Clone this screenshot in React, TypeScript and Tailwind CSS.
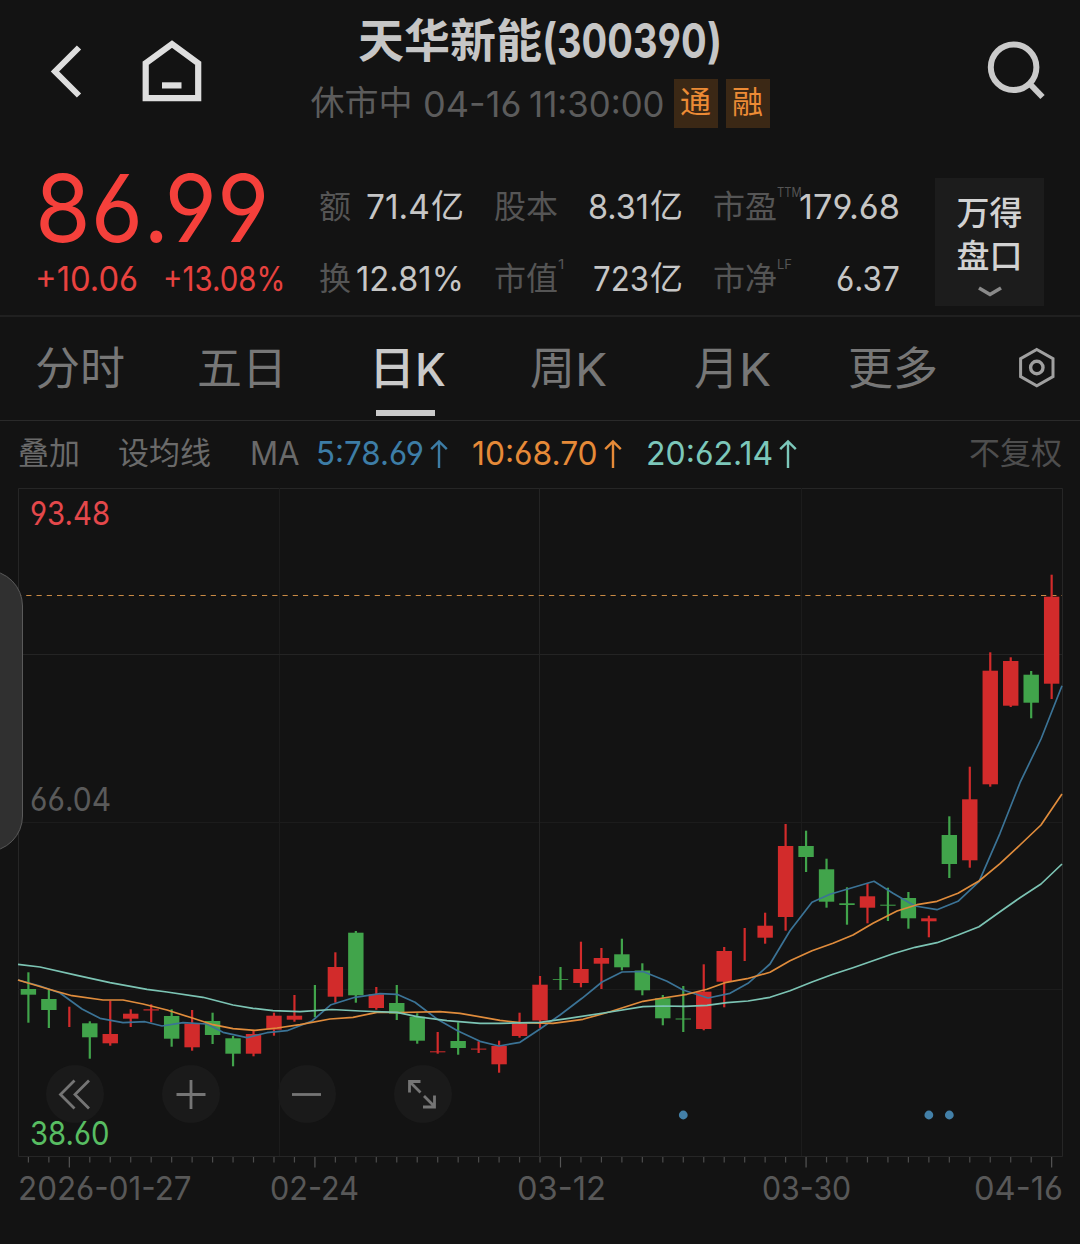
import { useLayoutEffect, useRef, type ReactNode } from 'react';

type TextProps = { w: number; className?: string; children: ReactNode };

/* Text squeezed or stretched horizontally so that it fills exactly `w` pixels. */
function Fit({ w, className = '', children }: TextProps) {
  const ref = useRef<HTMLSpanElement>(null);
  useLayoutEffect(() => {
    const el = ref.current;
    if (el && el.offsetWidth > 0) el.style.transform = `scaleX(${w / el.offsetWidth})`;
  }, [w]);
  return (
    <span className={`block shrink-0 whitespace-pre ${className}`} style={{ width: w }}>
      <span ref={ref} className="inline-block origin-left">
        {children}
      </span>
    </span>
  );
}

function Num({ w, className = '', children }: TextProps) {
  return (
    <Fit
      w={w}
      className={`font-['Inter','Noto_Sans_CJK_SC',sans-serif] [font-feature-settings:'cv03','cv04'] ${className}`}
    >
      {children}
    </Fit>
  );
}

function Cjk({ w, className = '', children }: TextProps) {
  return (
    <Fit w={w} className={`-translate-y-[0.085em] font-['Noto_Sans_CJK_SC',sans-serif] ${className}`}>
      {children}
    </Fit>
  );
}

type Stat = { label: string; lw: number; sup?: string; supW?: number; value: string; vw: number; unit?: boolean };

const stats: Stat[] = [
  { label: '额', lw: 32, value: '71.4', vw: 64, unit: true },
  { label: '股本', lw: 64, value: '8.31', vw: 61, unit: true },
  { label: '市盈', lw: 64, sup: 'TTM', supW: 25, value: '179.68', vw: 101 },
  { label: '换', lw: 32, value: '12.81%', vw: 108 },
  { label: '市值', lw: 64, sup: '1', supW: 6, value: '723', vw: 56, unit: true },
  { label: '市净', lw: 64, sup: 'LF', supW: 15, value: '6.37', vw: 64 },
];

/* [rising, high, low, body top, body bottom] */
type Candle = [0 | 1, number, number, number, number];

const candles: Candle[] = [
  [0, 972.3, 1022.7, 989, 994.7],
  [0, 990, 1028, 999, 1010],
  [1, 1006.7, 1027, 0, 0],
  [0, 1021.3, 1058.7, 1023.3, 1037.3],
  [1, 1000.7, 1045.7, 1034, 1043.3],
  [1, 1009.3, 1027, 1013.7, 1018.7],
  [1, 1004.3, 1022.3, 1009.3, 1010.5],
  [0, 1009.3, 1046.7, 1016, 1038.7],
  [1, 1010, 1050.7, 1023.7, 1047.3],
  [0, 1012.7, 1044, 1021, 1035],
  [0, 1036, 1066.3, 1038.3, 1053.7],
  [1, 1030, 1056.3, 1034, 1053.7],
  [1, 1012.7, 1035.7, 1015.7, 1029.7],
  [1, 995, 1021.7, 1015.7, 1019.7],
  [0, 985, 1017.3, 0, 0],
  [1, 952.3, 1002.7, 967, 996.7],
  [0, 931, 1002.7, 932.7, 995.3],
  [1, 987, 1009.7, 994.3, 1008],
  [0, 985, 1020, 1003, 1013.7],
  [0, 1013.3, 1043.7, 1016.7, 1040.7],
  [1, 1032, 1053.7, 1051.3, 1052.3],
  [0, 1022.3, 1054.7, 1041, 1048],
  [1, 1041.3, 1053, 1048.6, 1049.6],
  [1, 1040.7, 1072.7, 1046, 1064.3],
  [1, 1012.7, 1037.7, 1023.7, 1036],
  [1, 976, 1028, 984.7, 1020.5],
  [0, 967, 990, 979, 979.8],
  [1, 941.7, 987.3, 969, 983],
  [1, 948, 989, 958, 963.7],
  [0, 938.7, 970.3, 954.3, 967.3],
  [0, 963.3, 995.3, 970.5, 990.3],
  [0, 995, 1025.3, 998.3, 1018.3],
  [0, 986, 1032, 1018.5, 1019.5],
  [1, 964.3, 1030.3, 991.7, 1029],
  [1, 947, 1007.3, 951, 981.7],
  [1, 928, 961, 0, 0],
  [1, 912.7, 943.7, 925.7, 937.7],
  [1, 824, 930.7, 846, 917],
  [0, 830.7, 872, 846, 857],
  [0, 858.7, 907.7, 869.3, 901.7],
  [0, 887.3, 924.7, 903.3, 905],
  [1, 883.3, 923.3, 896.3, 907.7],
  [0, 887.7, 921, 904.7, 905.7],
  [0, 892, 928.7, 898, 918.3],
  [1, 915.7, 937.3, 918.3, 921.3],
  [0, 816.3, 878, 835, 864],
  [1, 766.7, 867.7, 799.3, 860.3],
  [1, 652.3, 786.7, 670.7, 784.3],
  [1, 657.3, 707, 661, 705.7],
  [0, 671, 718.3, 674.7, 702.7],
  [1, 574.7, 699, 596.7, 683.7],
];

const candleX = (i: number) => 28.4 + i * 20.465;

const ma5 =
  '18,980 40,986 60,993 82,1009 100,1018.3 123,1022.7 145,1021.7 162,1026 183,1022.7 207,1024 223,1032.3 247,1037.7 267,1032.7 287,1030.7 312,1021 331,1004.7 355,997.3 380,993.7 397,994.3 415,1002.3 437,1019 458,1031 480,1041.3 499,1046 520,1042.3 540,1029 560,1015 582,998.3 602,982 622,972 643,971.5 667,981.3 683,990 708,998 730,993.3 748,983.3 770,964 790,930.7 812,902.3 830,894.3 847,889.3 874,881.3 893,893.3 915,906 937,909.7 958,901.3 979,881.7 1000,833.3 1020,782.7 1041,739 1062,685.7';
const ma10 =
  '18,980 49,989.3 72,995.7 103,1000 123,1000 143,1004 167,1010 190,1017.3 213,1024.7 233,1028.7 255,1030.3 277,1028 300,1024.7 330,1019 353,1017.3 377,1012.3 400,1012.5 440,1011.7 460,1013.3 500,1020.3 520,1022.7 553,1023.3 583,1019.3 610,1011.7 643,1001.3 663,998 687,994.3 707,989.3 725,982.7 747,978.7 770,972.3 790,960.7 812,950.7 833,943.3 853,935 873,923.3 897,911 917,904.7 937,901.3 958,893.3 979,881 1000,863.7 1020,845 1041,825 1062,794';
const ma20 =
  '18,964.3 40,967 77,975.3 110,982.7 147,989.3 167,992 203,997.3 233,1005 253,1008.3 273,1010.7 300,1011.7 332,1009.5 360,1011 397,1012.3 417,1016.7 447,1020.7 480,1023.3 500,1023.3 540,1022.3 567,1018.7 610,1012 643,1006.7 663,1006 685,1006.3 707,1005.3 727,1002.7 748,1001 770,997.3 790,990.7 812,982 833,974.3 853,967.7 893,953.7 915,947.3 937,942.7 958,935 979,926.7 1000,911.7 1020,897.7 1041,884 1062,864';

function Chart() {
  return (
    <svg className="block h-[684px] w-[1080px]" viewBox="0 488 1080 684" fill="none">
      <g stroke="#1c1c1c" strokeWidth="1">
        <path d="M18.5 488.5H1062.5V1156.5H18.5Z" stroke="#262626" />
        <path d="M279.5 488V1156M801.5 488V1156M18 822.5H1062M18 989.5H1062" />
        <path d="M539.5 488V1156M18 654.5H1062" stroke="#242424" />
      </g>
      {candles.map((_, i) => (
        <path
          key={i}
          d={`M${candleX(i)} 1157V${i % 12 === 2 ? 1167.5 : 1162.5}`}
          stroke={i % 12 === 2 ? '#555' : '#4c4c4c'}
          strokeWidth="1.2"
        />
      ))}
      <path d="M18 595.5H1062" stroke="#c98a45" strokeWidth="1.2" strokeDasharray="5.2 5.05" strokeDashoffset="2" />
      {candles.map(([up, high, low, top, bottom], i) => {
        const fill = up ? '#d22b2b' : '#41a44b';
        const x = candleX(i);
        return (
          <g key={i} fill={fill}>
            <rect x={x - 1.1} y={high} width="2.2" height={low - high} />
            {top > 0 && <rect x={x - 7.7} y={top} width="15.4" height={bottom - top} />}
          </g>
        );
      })}
      <g strokeWidth="1.7" strokeLinejoin="round">
        <polyline points={ma5} stroke="#3b7396" />
        <polyline points={ma10} stroke="#e08c3c" />
        <polyline points={ma20} stroke="#7cc4b4" />
      </g>
      <g fill="#4380a8">
        <circle cx={candleX(32)} cy="1115" r="4.4" />
        <circle cx={candleX(44)} cy="1115" r="4.4" />
        <circle cx={candleX(45)} cy="1115" r="4.4" />
      </g>
    </svg>
  );
}

function RoundButton({ d, label }: { d: string; label: string }) {
  return (
    <button aria-label={label} className="flex size-[58px] items-center justify-center rounded-full bg-[#1a1a1a]">
      <svg className="size-[58px]" viewBox="0 0 58 58" fill="none" stroke="#757575" strokeWidth="2.8">
        <path d={d} />
      </svg>
    </button>
  );
}

function UpArrow({ className }: { className: string }) {
  return (
    <svg className={`h-[30px] w-[18px] shrink-0 ${className}`} viewBox="0 0 18 30" fill="none" stroke="currentColor" strokeWidth="2.4">
      <path d="M9 29V2.5M1.2 10.2L9 2.4L16.8 10.2" />
    </svg>
  );
}

export default function App() {
  return (
    <div className="relative flex h-[1244px] w-[1080px] flex-col overflow-hidden bg-[#131313] text-[#c6c6c6]">
      <header className="flex h-[171px] justify-between">
        <div className="flex w-[300px] items-start pt-[36px] pl-[46px]">
          <svg className="h-[70px] w-[40px]" viewBox="46 36 40 70" fill="none" stroke="#dedede" strokeWidth="6">
            <path d="M79 47.5L55 71.5L79 95.5" />
          </svg>
          <svg className="ml-[50px] h-[70px] w-[72px]" viewBox="136 36 72 70" fill="none" stroke="#dedede" strokeWidth="6.2">
            <path d="M145.7 63.2L172 44L198.2 63.2V98.2H145.7Z" />
            <path d="M162 85.4H181.5" />
          </svg>
        </div>
        <div className="flex flex-col items-center pt-[10px]">
          <div className="flex h-[62px] items-center leading-[62px] font-bold">
            <Cjk w={184} className="text-[46px]">天华新能</Cjk>
            <Num w={15} className="text-[48px]">(</Num>
            <Num w={150} className="text-[48px]">300390</Num>
            <Num w={15} className="text-[48px]">)</Num>
          </div>
          <div className="flex h-16 items-center text-[#5c5c5c]">
            <Cjk w={102} className="text-[34px] leading-[64px]">休市中</Cjk>
            <Num w={98} className="ml-[10px] text-[35px] leading-[64px]">04-16</Num>
            <Num w={136} className="ml-[8px] text-[35px] leading-[64px]">11:30:00</Num>
            <div className="mb-px ml-[9px] flex gap-2 text-[#ec8b35]">
              <div className="flex h-[49px] w-[44px] justify-center bg-[#3b2815]">
                <Cjk w={31} className="text-[31px] leading-[47px]">通</Cjk>
              </div>
              <div className="flex h-[49px] w-[44px] justify-center bg-[#3b2815]">
                <Cjk w={31} className="text-[31px] leading-[47px]">融</Cjk>
              </div>
            </div>
          </div>
        </div>
        <div className="flex w-[300px] justify-end pt-[36px] pr-[30px]">
          <svg className="h-[70px] w-[70px]" viewBox="980 36 70 70" fill="none" stroke="#cacaca" strokeWidth="6">
            <circle cx="1013.6" cy="67.2" r="22.8" />
            <path d="M1029 83L1042.5 97" />
          </svg>
        </div>
      </header>

      <section className="flex h-[144px] pl-[35px]">
        <div className="w-[284px] text-[#f5403b]">
          <Num w={234} className="h-[72px] text-[94px] leading-[74px]">86.99</Num>
          <div className="flex h-[72px] items-center text-[34px] leading-[72px] text-[#e8423f]">
            <Num w={103}>+10.06</Num>
            <Num w={122} className="ml-[25px]">+13.08%</Num>
          </div>
        </div>
        <div className="grid w-[581px] grid-cols-[145px_189px_187px] grid-rows-2 gap-x-[30px] text-[34px] leading-[72px]">
          {stats.map((s) => (
            <div key={s.label} className="relative flex justify-between">
              <div className="flex text-[#555]">
                <Cjk w={s.lw} className="text-[32px]">{s.label}</Cjk>
                {s.sup && (
                  <div className="absolute top-[15px] left-[64px] text-[13px] leading-[13px]">
                    <Num w={s.supW ?? 10}>{s.sup}</Num>
                  </div>
                )}
              </div>
              <div className="flex">
                <Num w={s.vw}>{s.value}</Num>
                {s.unit && <Cjk w={33} className="ml-[1px] text-[33px]">亿</Cjk>}
              </div>
            </div>
          ))}
        </div>
        <button className="mt-[7px] ml-[35px] flex h-[128px] w-[109px] flex-col items-center bg-[#1c1c1c] pt-[15px] text-[33px] font-medium text-[#d2d2d2]">
          <Cjk w={66} className="h-[43px] leading-[43px]">万得</Cjk>
          <Cjk w={66} className="h-[43px] leading-[43px]">盘口</Cjk>
          <svg className="mt-[5px] h-[16px] w-[28px]" viewBox="0 0 28 16" fill="none" stroke="#8a8a8a" strokeWidth="3.6">
            <path d="M3 4L14 10.5L25 4" />
          </svg>
        </button>
      </section>

      <nav className="flex h-[106px] border-t-2 border-b border-t-[#202020] border-b-[#2a2a2a] text-[45px] leading-[106px] text-[#777]">
        <Cjk w={90} className="ml-[35px]">分时</Cjk>
        <Cjk w={90} className="ml-[72px]">五日</Cjk>
        <div className="relative ml-[82px] flex font-medium text-[#cacaca]">
          <Cjk w={46}>日</Cjk>
          <Num w={31}>K</Num>
          <div className="absolute top-[93px] left-[7px] h-[6px] w-[59px] bg-[#cacaca]" />
        </div>
        <Cjk w={45} className="ml-[84px]">周</Cjk>
        <Num w={32}>K</Num>
        <Cjk w={45} className="ml-[87px]">月</Cjk>
        <Num w={32}>K</Num>
        <Cjk w={90} className="ml-[77px]">更多</Cjk>
        <svg className="mt-[26px] ml-[77px] h-[48px] w-[42px]" viewBox="1015 343 42 48" fill="none" stroke="#a0a0a0" strokeWidth="3">
          <path d="M1036.8 349.5L1053 358.6V376.6L1036.8 385.7L1020.6 376.6V358.6Z" />
          <circle cx="1036.8" cy="367.5" r="6.2" strokeWidth="3.4" />
        </svg>
      </nav>

      <div className="flex h-[67px] items-center pb-[2px] text-[33px] leading-[65px] text-[#6a6a6a]">
        <Cjk w={62} className="ml-[18px] text-[31px]">叠加</Cjk>
        <Cjk w={93} className="ml-[38px] text-[31px]">设均线</Cjk>
        <Num w={50} className="ml-[39px]">MA</Num>
        <Num w={108} className="ml-[16px] text-[#3d7da6]">5:78.69</Num>
        <UpArrow className="ml-[6px] text-[#3d7da6]" />
        <Num w={126} className="ml-[24px] text-[#e68a38]">10:68.70</Num>
        <UpArrow className="ml-[6px] text-[#e68a38]" />
        <Num w={127} className="ml-[24px] text-[#7cc7ba]">20:62.14</Num>
        <UpArrow className="ml-[6px] text-[#7cc7ba]" />
        <Cjk w={93} className="mr-[18px] ml-auto text-[31px] text-[#4e4e4e]">不复权</Cjk>
      </div>

      <main className="relative h-[684px] text-[33px] leading-[34px]">
        <Chart />
        <div className="absolute top-[8px] left-[30px] text-[#e4484b]">
          <Num w={80}>93.48</Num>
        </div>
        <div className="absolute top-[294px] left-[30px] text-[#5a5a5a]">
          <Num w={81}>66.04</Num>
        </div>
        <div className="absolute top-[577px] left-[46px] flex gap-[58px]">
          <RoundButton label="向前" d="M28.5 15.5L14.5 29.5L28.5 43.5M43 15.5L29 29.5L43 43.5" />
          <RoundButton label="放大" d="M14.5 29.5H43.5M29 15V44" />
          <RoundButton label="缩小" d="M14 29.5H43" />
          <RoundButton label="全屏" d="M26.5 16.5H15.5V27.5M15.5 16.5L26.5 27.5M30 31L40.5 41.5M29 42H40.5V30.5" />
        </div>
        <div className="absolute top-[628px] left-[30px] text-[#58bd62]">
          <Num w={80}>38.60</Num>
        </div>
      </main>

      <footer className="-mt-px flex text-[33px] leading-[34px] text-[#585858]">
        <Num w={174} className="ml-[18px]">2026-01-27</Num>
        <Num w={89} className="ml-[78px]">02-24</Num>
        <Num w={89} className="ml-[158px]">03-12</Num>
        <Num w={89} className="ml-[156px]">03-30</Num>
        <Num w={89} className="ml-[123px]">04-16</Num>
      </footer>

      <div className="absolute top-[570px] left-[-60px] h-[282px] w-[83px] rounded-[36px] border border-[#5a5a5a] bg-[#303030]" />
    </div>
  );
}
